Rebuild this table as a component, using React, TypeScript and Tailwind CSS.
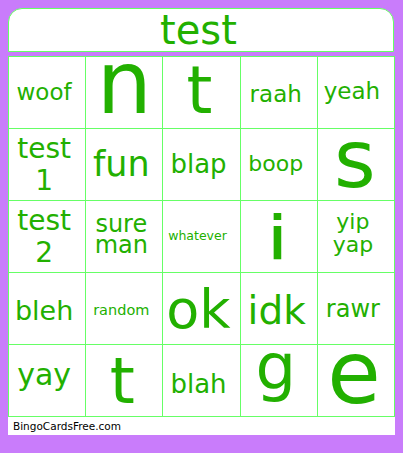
import React from "react";

type Cell = { lines: string[]; size: number; lh?: number; dy?: number; dx?: number; sx?: number };

const cells: Cell[] = [
  { lines: ["woof"], size: 23 },
  { lines: ["n"], size: 87, dy: -9, dx: 3 },
  { lines: ["t"], size: 66, dy: -2, dx: 1 },
  { lines: ["raah"], size: 23, dy: 1.5 },
  { lines: ["yeah"], size: 23, dy: -1, dx: -1 },
  { lines: ["test", "1"], size: 28, lh: 32 },
  { lines: ["fun"], size: 35 },
  { lines: ["blap"], size: 26, dy: -1 },
  { lines: ["boop"], size: 22, dy: -1 },
  { lines: ["s"], size: 80, dy: -5, dx: 2 },
  { lines: ["test", "2"], size: 28, lh: 32 },
  { lines: ["sure", "man"], size: 24, lh: 21, dy: -2 },
  { lines: ["whatever"], size: 12.5, dx: -1 },
  { lines: ["i"], size: 60, dy: 1, dx: 2, sx: 1.4 },
  { lines: ["yip", "yap"], size: 22, lh: 23, dy: -4 },
  { lines: ["bleh"], size: 27, dy: 2 },
  { lines: ["random"], size: 14.5, dy: 2 },
  { lines: ["ok"], size: 54, dy: 1 },
  { lines: ["idk"], size: 39, dy: 1.5, dx: 1 },
  { lines: ["rawr"], size: 24 },
  { lines: ["yay"], size: 30, dy: -6 },
  { lines: ["t"], size: 64, dx: 1 },
  { lines: ["blah"], size: 26, dy: 2.5 },
  { lines: ["g"], size: 64, dy: -14 },
  { lines: ["e"], size: 87, dy: -7.5, dx: 1 },
];

export default function App() {
  return (
    <div
      className="w-[403px] h-[453px] bg-[#c97cfb] pt-[8px] pl-[8px]"
      style={{ fontFamily: "'DejaVu Sans', Verdana, sans-serif" }}
    >
      <div className="w-[386px] h-[44px] bg-white border border-[#66ff66] rounded-t-[14px] flex items-center justify-center pr-[5px]">
        <span className="text-[40px] leading-none text-[#22b000]">test</span>
      </div>
      <div className="mt-[4px] w-[387px] grid grid-cols-5 bg-white border-l border-t border-[#66ff66]">
        {cells.map((c, i) => (
          <div
            key={i}
            className="h-[72px] border-r border-b border-[#66ff66] flex flex-col items-center justify-center text-[#22b000] overflow-hidden pr-[6px]"
          >
            <div
              className="flex flex-col items-center"
              style={{
                transform: `translate(${c.dx ?? 0}px, ${c.dy ?? 0}px)${c.sx ? ` scaleX(${c.sx})` : ""}`,
              }}
            >
              {c.lines.map((l, j) => (
                <span
                  key={j}
                  className="block whitespace-nowrap"
                  style={{
                    fontSize: c.size,
                    lineHeight: c.lh ? `${c.lh}px` : 1,
                  }}
                >
                  {l}
                </span>
              ))}
            </div>
          </div>
        ))}
      </div>
      <div className="w-[387px] h-[18px] bg-white pl-[5px] flex items-center">
        <span className="text-[10.5px] leading-none text-black">BingoCardsFree.com</span>
      </div>
    </div>
  );
}
